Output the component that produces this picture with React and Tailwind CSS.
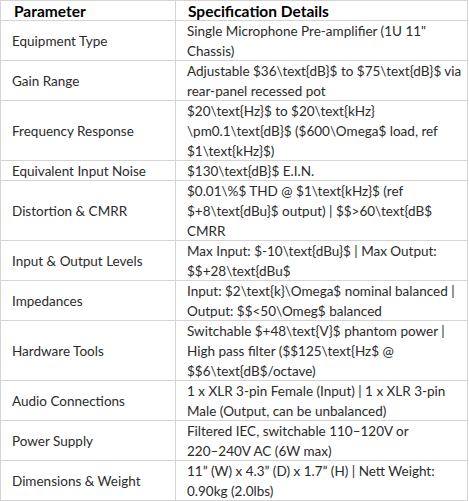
import React from "react";

const rows = [
  ["Equipment Type", ['Single Microphone Pre-amplifier (1U 11"', "Chassis)"]],
  ["Gain Range", ["Adjustable $36\\text{dB}$ to $75\\text{dB}$ via", "rear-panel recessed pot"]],
  ["Frequency Response", ["$20\\text{Hz}$ to $20\\text{kHz}", "\\pm0.1\\text{dB}$ ($600\\Omega$ load, ref", "$1\\text{kHz}$)"]],
  ["Equivalent Input Noise", ["$130\\text{dB}$ E.I.N."]],
  ["Distortion & CMRR", ["$0.01\\%$ THD @ $1\\text{kHz}$ (ref", "$+8\\text{dBu}$ output) | $$>60\\text{dB$", "CMRR"]],
  ["Input & Output Levels", ["Max Input: $-10\\text{dBu}$ | Max Output:", "$$+28\\text{dBu$"]],
  ["Impedances", ["Input: $2\\text{k}\\Omega$ nominal balanced |", "Output: $$<50\\Omeg$ balanced"]],
  ["Hardware Tools", ["Switchable $+48\\text{V}$ phantom power |", "High pass filter ($$125\\text{Hz$ @", "$$6\\text{dB$/octave)"]],
  ["Audio Connections", ["1 x XLR 3-pin Female (Input) | 1 x XLR 3-pin", "Male (Output, can be unbalanced)"]],
  ["Power Supply", ["Filtered IEC, switchable 110\u2013120V or", "220\u2013240V AC (6W max)"]],
  ["Dimensions & Weight", ["11\u201d (W) x 4.3\u201d (D) x 1.7\u201d (H) | Nett Weight:", "0.90kg (2.0lbs)"]],
];

export default function App() {
  return (
    <div
      className="w-[468px] bg-white border-x border-[#d4d4d4] text-[13.5px] leading-[20px] text-[#2b2b2b]"
      style={{ fontFamily: "Lato, 'Liberation Sans', sans-serif" }}
    >
      <div className="flex border-t border-[#d4d4d4] font-bold text-black text-[15.5px]">
        <div className="w-[175px] shrink-0 border-r border-[#d4d4d4] pl-[13px]">Parameter</div>
        <div className="flex-1 pl-[12px]">Specification Details</div>
      </div>
      {rows.map(([label, lines]) => (
        <div key={label} className="flex -mt-px border-t border-[#d4d4d4]">
          <div className="w-[175px] shrink-0 border-r border-[#d4d4d4] pl-[11px] flex items-center whitespace-nowrap">
            {label}
          </div>
          <div className="flex-1 pl-[11px]">
            {lines.map((l, i) => (
              <div key={i} className="whitespace-nowrap">{l}</div>
            ))}
          </div>
        </div>
      ))}
      <div className="-mt-px border-t border-[#d4d4d4]" />
    </div>
  );
}
